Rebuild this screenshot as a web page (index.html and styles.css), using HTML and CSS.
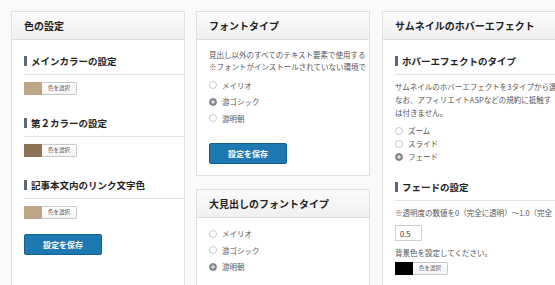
FILE: index.html
```html
<!DOCTYPE html>
<html lang="ja">

<head>
  <meta charset="UTF-8">
  <meta name="viewport" content="width=device-width, initial-scale=1.0">
  <title>テーマ設定</title>

  <link rel="stylesheet" href="styles.css">
</head>

<body>
  <!-- 色の設定 -->
  <div class="col">
    <div class="card card-tall">
      <div class="card-head">色の設定</div>
      <div class="card-body">
        <h3 class="sub-title">メインカラーの設定</h3>
        <div class="color-pick">
          <span class="swatch" style="background-color: #bda585;"></span>
          <span class="pick-btn">色を選択</span>
        </div>

        <h3 class="sub-title next">第２カラーの設定</h3>
        <div class="color-pick">
          <span class="swatch" style="background-color: #8f7156;"></span>
          <span class="pick-btn">色を選択</span>
        </div>

        <h3 class="sub-title next">記事本文内のリンク文字色</h3>
        <div class="color-pick">
          <span class="swatch" style="background-color: #bda585;"></span>
          <span class="pick-btn">色を選択</span>
        </div>

        <button class="save-btn save-first">設定を保存</button>
      </div>
    </div>
  </div>

  <!-- フォント -->
  <div class="col">
    <div class="card">
      <div class="card-head">フォントタイプ</div>
      <div class="card-body font-body">
        <p class="note">見出し以外のすべてのテキスト要素で使用する<br>※フォントがインストールされていない環境で</p>
        <div class="radios">
          <label class="radio-row"><span class="radio"></span>メイリオ</label>
          <label class="radio-row"><span class="radio checked"></span>游ゴシック</label>
          <label class="radio-row"><span class="radio"></span>游明朝</label>
        </div>
        <button class="save-btn">設定を保存</button>
      </div>
    </div>

    <div class="card card-tall">
      <div class="card-head">大見出しのフォントタイプ</div>
      <div class="card-body font-body">
        <div class="radios only">
          <label class="radio-row"><span class="radio"></span>メイリオ</label>
          <label class="radio-row"><span class="radio"></span>游ゴシック</label>
          <label class="radio-row"><span class="radio checked"></span>游明朝</label>
        </div>
      </div>
    </div>
  </div>

  <!-- ホバーエフェクト -->
  <div class="col col-wide">
    <div class="card card-tall">
      <div class="card-head">サムネイルのホバーエフェクト</div>
      <div class="card-body">
        <h3 class="sub-title">ホバーエフェクトのタイプ</h3>
        <p class="note tight">サムネイルのホバーエフェクトを3タイプから選<br>なお、アフィリエイトASPなどの規約に抵触す<br>は付きません。</p>
        <div class="radios tight">
          <label class="radio-row"><span class="radio"></span>ズーム</label>
          <label class="radio-row"><span class="radio"></span>スライド</label>
          <label class="radio-row"><span class="radio checked"></span>フェード</label>
        </div>

        <h3 class="sub-title fade-title">フェードの設定</h3>
        <p class="note">※透明度の数値を0（完全に透明）〜1.0（完全</p>
        <input class="num-input" type="text" value="0.5">
        <p class="note bg-note">背景色を設定してください。</p>
        <div class="color-pick">
          <span class="swatch" style="background-color: #000;"></span>
          <span class="pick-btn">色を選択</span>
        </div>
      </div>
    </div>
  </div>
</body>

</html>
```

FILE: styles.css
```css
body {
  font-family: "Noto Sans CJK JP", "Liberation Sans", sans-serif;
  display: flex;
  gap: 12px;
  margin: 0;
  padding: 11px 0 0 11px;
  height: 285px;
  box-sizing: border-box;
  overflow: hidden;
  background-color: #fafafa;
  color: #444;
}

.col {
  display: flex;
  flex-direction: column;
  gap: 13px;
  width: 174px;
  flex-shrink: 0;
}

.col:first-child {
  margin-right: -1px;
}

.col-wide {
  width: 240px;
}

.card {
  background-color: #fff;
  border: 1px solid #e0e0e0;
  overflow: hidden;
  white-space: nowrap;
}

.card-tall {
  flex: 1;
  border-bottom: none;
}

.card-head {
  height: 27px;
  line-height: 27px;
  padding: 0 12px;
  background: linear-gradient(#fbfbfb, #f0f0f0);
  border-bottom: 1px solid #dcdcdc;
  font-size: 10px;
  font-weight: bold;
  color: #222;
}

.card-body {
  padding: 15px 0 11px 12px;
}

.font-body {
  padding-top: 9px;
}

/* 小見出し */
.sub-title {
  margin: 0;
  padding-bottom: 7px;
  border-bottom: 1px solid #e3e3e3;
  font-size: 9.5px;
  line-height: 12px;
  font-weight: bold;
  color: #222;
  display: flex;
  align-items: center;
}

.sub-title::before {
  content: "";
  display: inline-block;
  width: 3px;
  height: 10px;
  background-color: #5d6878;
  margin-right: 4px;
}

.sub-title.next {
  margin-top: 22px;
}

.fade-title {
  margin-top: 18px;
}

.color-pick {
  display: flex;
  margin-top: 7px;
  height: 13px;
}

.swatch {
  width: 18px;
  height: 13px;
}

.pick-btn {
  width: 35px;
  height: 13px;
  box-sizing: border-box;
  border: 1px solid #c8c8c8;
  border-left: none;
  border-radius: 0 2px 2px 0;
  background: linear-gradient(#fff, #f4f4f4);
  font-size: 5.5px;
  line-height: 11px;
  text-align: center;
  color: #555;
}

.save-btn {
  display: block;
  width: 78px;
  height: 21px;
  border: 1px solid #12608f;
  border-radius: 2px;
  background-color: #1e78b2;
  color: white;
  font-family: inherit;
  font-size: 8px;
  font-weight: bold;
  padding: 0;
  cursor: pointer;
}

.save-first {
  margin-top: 15px;
}

.note {
  margin: 0;
  font-size: 7.5px;
  line-height: 12px;
  color: #555;
}

.note.tight {
  margin-top: 5px;
  line-height: 13px;
}

.radios {
  display: flex;
  flex-direction: column;
  margin: 4px 0 16px;
}

.radios.only {
  margin-top: -1px;
}

.radios.tight {
  margin: 5px 0 0;
}

.radio-row {
  display: flex;
  align-items: center;
  height: 16.5px;
  font-size: 7.5px;
  color: #555;
}

.radios.tight .radio-row {
  height: 13px;
}

.radio {
  width: 8px;
  height: 8px;
  box-sizing: border-box;
  border: 1px solid #c9c9c9;
  border-radius: 50%;
  background-color: #fff;
  margin-right: 5px;
}

.radio.checked {
  border-color: #7d7d7d;
  background: radial-gradient(circle, #dcdcdc 0 1.4px, #8a8a8a 1.9px);
}

.fade-title + .note {
  margin-top: 6px;
}

.num-input {
  display: block;
  width: 27px;
  height: 16px;
  box-sizing: border-box;
  margin-top: 6px;
  padding: 0 0 0 4px;
  border: 1px solid #cfcfcf;
  font-family: inherit;
  font-size: 7.5px;
  color: #333;
}

.bg-note {
  margin-top: 6px;
}

.bg-note + .color-pick {
  margin-top: 3px;
}
```
